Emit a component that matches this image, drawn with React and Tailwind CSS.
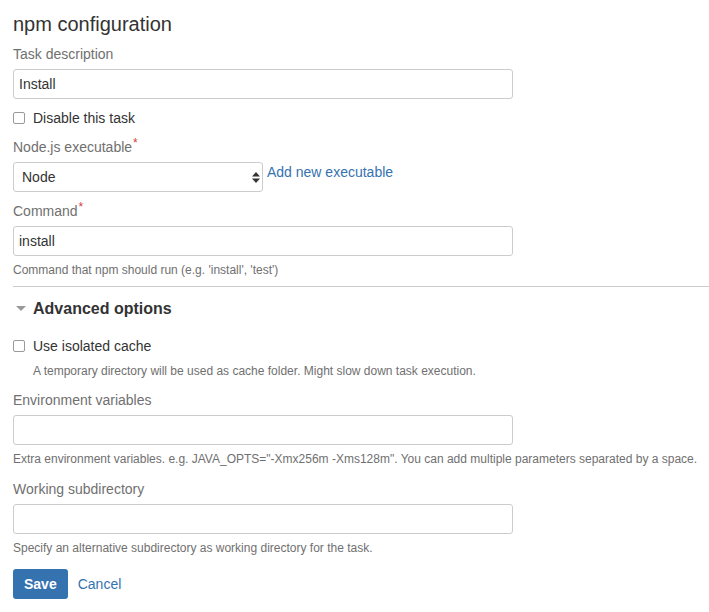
import React, { useState } from "react";

const Label = ({ children, required, className = "" }) => (
  <div className={`text-[14px] leading-[20px] h-[20px] text-[#707070] ${className}`}>
    {children}
    {required && (
      <span className="text-[#d04437] text-[12px] leading-[0] align-top relative top-[6px] ml-[1px]">*</span>
    )}
  </div>
);

const TextField = ({ value, onChange, className = "" }) => (
  <input
    type="text"
    value={value}
    onChange={(e) => onChange(e.target.value)}
    className={`block w-[500px] h-[30px] border border-[#cccccc] rounded-[3px] px-[5px] text-[14px] text-[#333] bg-white outline-none ${className}`}
  />
);

const Help = ({ children, className = "" }) => (
  <div className={`text-[12px] leading-[16px] text-[#707070] ${className}`}>{children}</div>
);

const Check = ({ checked, onToggle, label }) => (
  <label className="flex items-center cursor-pointer text-[14px] leading-[20px] text-[#333]" onClick={onToggle}>
    <span
      className={`w-[12px] h-[12px] border border-[#999] rounded-[2px] mr-[8px] ${checked ? "bg-[#3572b0]" : "bg-white"}`}
    />
    {label}
  </label>
);

export default function App() {
  const [desc, setDesc] = useState("Install");
  const [disabled, setDisabled] = useState(false);
  const [exe, setExe] = useState("Node");
  const [command, setCommand] = useState("install");
  const [isolated, setIsolated] = useState(false);
  const [env, setEnv] = useState("");
  const [subdir, setSubdir] = useState("");

  return (
    <div
      className="bg-white min-h-[612px] pl-[13px] pt-[12px]"
      style={{ fontFamily: '"Liberation Sans", Arial, sans-serif' }}
    >
      <h2 className="text-[20px] leading-[24px] text-[#333] font-normal">npm configuration</h2>

      <Label className="mt-[8px]">Task description</Label>
      <TextField value={desc} onChange={setDesc} className="mt-[5px]" />

      <div className="mt-[9px]">
        <Check checked={disabled} onToggle={() => setDisabled(!disabled)} label="Disable this task" />
      </div>

      <Label className="mt-[9px]" required>Node.js executable</Label>
      <div className="flex items-start mt-[5px]">
        <div className="relative w-[250px] h-[30px]">
          <select
            value={exe}
            onChange={(e) => setExe(e.target.value)}
            className="appearance-none w-full h-full border border-[#cccccc] rounded-[3px] pl-[8px] text-[14px] text-[#333] bg-white outline-none"
          >
            <option>Node</option>
          </select>
          <svg className="absolute right-[3px] top-[10px] pointer-events-none" width="8" height="11" viewBox="0 0 8 11">
            <path d="M4 0 L8 4.5 L0 4.5 Z" fill="#333" />
            <path d="M0 6.5 L8 6.5 L4 11 Z" fill="#333" />
          </svg>
        </div>
        <a href="#" className="ml-[4px] text-[14px] leading-[20px] text-[#3572b0]">Add new executable</a>
      </div>

      <Label className="mt-[9px]" required>Command</Label>
      <TextField value={command} onChange={setCommand} className="mt-[5px]" />
      <Help className="mt-[6px]">Command that npm should run (e.g. 'install', 'test')</Help>

      <div className="border-t border-[#ccc] mt-[8px]" />

      <div className="flex items-center mt-[12px]">
        <svg width="10" height="6" viewBox="0 0 10 6" className="ml-[3px] mr-[7px]">
          <path d="M0 0 L10 0 L5 5 Z" fill="#999" />
        </svg>
        <span className="text-[16px] leading-[20px] font-bold text-[#333]">Advanced options</span>
      </div>

      <div className="mt-[17px]">
        <Check checked={isolated} onToggle={() => setIsolated(!isolated)} label="Use isolated cache" />
      </div>
      <Help className="mt-[7px] pl-[20px]">A temporary directory will be used as cache folder. Might slow down task execution.</Help>

      <Label className="mt-[11px]">Environment variables</Label>
      <TextField value={env} onChange={setEnv} className="mt-[5px]" />
      <Help className="mt-[6px]">
        Extra environment variables. e.g. JAVA_OPTS="-Xmx256m -Xms128m". You can add multiple parameters separated by a space.
      </Help>

      <Label className="mt-[12px]">Working subdirectory</Label>
      <TextField value={subdir} onChange={setSubdir} className="mt-[5px]" />
      <Help className="mt-[6px]">Specify an alternative subdirectory as working directory for the task.</Help>

      <div className="flex items-center mt-[13px]">
        <button className="h-[30px] px-[11px] bg-[#3572b0] text-white font-bold text-[14px] rounded-[3px]">Save</button>
        <a href="#" className="ml-[10px] text-[14px] text-[#3572b0]">Cancel</a>
      </div>
    </div>
  );
}
